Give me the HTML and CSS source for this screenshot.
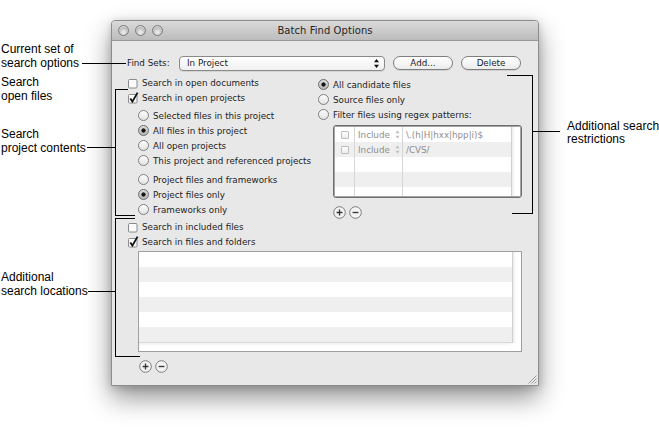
FILE: index.html
```html
<!DOCTYPE html>
<html>
<head>
<meta charset="utf-8">
<title>Batch Find Options</title>
<link rel="stylesheet" href="styles.css">
</head>
<body>
<div class="stage">
  <div class="window">
    <div class="titlebar">
      <div class="lights"><span class="light"></span><span class="light"></span><span class="light"></span></div>
      <div class="title">Batch Find Options</div>
      <div></div>
    </div>
    <div class="content">
      <div class="findrow">
        <span class="findlabel">Find Sets:</span>
        <div class="popup">
          <span class="popup-text">In Project</span>
          <svg class="popup-arrows" width="7" height="11" viewBox="0 0 7 11"><path d="M3.5 1 L6 4.2 L1 4.2 Z M3.5 10 L6 6.8 L1 6.8 Z" fill="#111"/></svg>
        </div>
        <div class="btn btn-add">Add...</div>
        <div class="btn">Delete</div>
      </div>

      <div class="columns">
        <div class="col-left">
          <div class="opt"><svg class="cb" width="12" height="12" viewBox="0 0 12 12"><rect x="1.5" y="2.5" width="8.5" height="8.5" rx="1" fill="#fbfbfb" stroke="#8a8a8a"/></svg>Search in open documents</div>
          <div class="opt"><svg class="cb" width="12" height="12" viewBox="0 0 12 12"><rect x="1.5" y="2.5" width="8.5" height="8.5" rx="1" fill="#fbfbfb" stroke="#8a8a8a"/><path d="M3.3 6.6 L5.4 9.6 L10.6 0.6" fill="none" stroke="#111" stroke-width="1.8"/></svg>Search in open projects</div>
          <div class="group g1">
            <div class="opt"><span class="rb indent"></span>Selected files in this project</div>
            <div class="opt"><span class="rb indent on"></span>All files in this project</div>
            <div class="opt"><span class="rb indent"></span>All open projects</div>
            <div class="opt"><span class="rb indent"></span>This project and referenced projects</div>
          </div>
          <div class="group g2">
            <div class="opt"><span class="rb indent"></span>Project files and frameworks</div>
            <div class="opt"><span class="rb indent on"></span>Project files only</div>
            <div class="opt"><span class="rb indent"></span>Frameworks only</div>
          </div>
          <div class="group g3">
            <div class="opt"><svg class="cb" width="12" height="12" viewBox="0 0 12 12"><rect x="1.5" y="2.5" width="8.5" height="8.5" rx="1" fill="#fbfbfb" stroke="#8a8a8a"/></svg>Search in included files</div>
            <div class="opt"><svg class="cb" width="12" height="12" viewBox="0 0 12 12"><rect x="1.5" y="2.5" width="8.5" height="8.5" rx="1" fill="#fbfbfb" stroke="#8a8a8a"/><path d="M3.3 6.6 L5.4 9.6 L10.6 0.6" fill="none" stroke="#111" stroke-width="1.8"/></svg>Search in files and folders</div>
          </div>
        </div>

        <div class="col-right">
          <div class="opt"><span class="rb rr on"></span>All candidate files</div>
          <div class="opt"><span class="rb rr"></span>Source files only</div>
          <div class="opt"><span class="rb rr"></span>Filter files using regex patterns:</div>
          <div class="ptable">
            <div class="ptable-body">
              <div class="prow">
                <div class="pc pc-cb"><span class="minicb"></span></div>
                <div class="pc pc-inc">Include<svg class="step" width="5" height="9" viewBox="0 0 5 9"><path d="M2.5 0.5 L4.5 3.3 L0.5 3.3 Z M2.5 8.5 L4.5 5.7 L0.5 5.7 Z" fill="#bdbdbd"/></svg></div>
                <div class="pc pc-pat">\.(h|H|hxx|hpp|i)$</div>
              </div>
              <div class="prow alt">
                <div class="pc pc-cb"><span class="minicb"></span></div>
                <div class="pc pc-inc">Include<svg class="step" width="5" height="9" viewBox="0 0 5 9"><path d="M2.5 0.5 L4.5 3.3 L0.5 3.3 Z M2.5 8.5 L4.5 5.7 L0.5 5.7 Z" fill="#bdbdbd"/></svg></div>
                <div class="pc pc-pat">/CVS/</div>
              </div>
              <div class="prow"><div class="pc pc-cb"></div><div class="pc pc-inc"></div><div class="pc pc-pat"></div></div>
              <div class="prow alt"><div class="pc pc-cb"></div><div class="pc pc-inc"></div><div class="pc pc-pat"></div></div>
              <div class="prow last"><div class="pc pc-cb"></div><div class="pc pc-inc"></div><div class="pc pc-pat"></div></div>
            </div>
            <div class="vscroll"></div>
          </div>
          <div class="pm pm-right">
            <svg width="13" height="13" viewBox="0 0 13 13"><circle cx="6.5" cy="6.5" r="5.8" fill="#f3f3f3" stroke="#7c7c7c"/><path d="M3.6 6.5 H9.4 M6.5 3.6 V9.4" stroke="#333" stroke-width="1.3"/></svg>
            <svg width="13" height="13" viewBox="0 0 13 13"><circle cx="6.5" cy="6.5" r="5.8" fill="#f3f3f3" stroke="#7c7c7c"/><path d="M3.6 6.5 H9.4" stroke="#333" stroke-width="1.3"/></svg>
          </div>
        </div>
      </div>

      <div class="filelist">
        <div class="fl-main">
          <div class="fl-rows">
            <div class="frow"></div>
            <div class="frow alt"></div>
            <div class="frow"></div>
            <div class="frow alt"></div>
            <div class="frow"></div>
            <div class="frow alt"></div>
          </div>
          <div class="vscroll"></div>
        </div>
        <div class="hscroll"></div>
      </div>
      <div class="pm pm-left">
        <svg width="13" height="13" viewBox="0 0 13 13"><circle cx="6.5" cy="6.5" r="5.8" fill="#f3f3f3" stroke="#7c7c7c"/><path d="M3.6 6.5 H9.4 M6.5 3.6 V9.4" stroke="#333" stroke-width="1.3"/></svg>
        <svg width="13" height="13" viewBox="0 0 13 13"><circle cx="6.5" cy="6.5" r="5.8" fill="#f3f3f3" stroke="#7c7c7c"/><path d="M3.6 6.5 H9.4" stroke="#333" stroke-width="1.3"/></svg>
      </div>
    </div>
    <svg class="grip" width="10" height="10" viewBox="0 0 10 10"><path d="M9.5 1.5 L1.5 9.5 M9.5 4.5 L4.5 9.5 M9.5 7.5 L7.5 9.5" stroke="#9a9a9a" stroke-width="1"/></svg>
  </div>

  <div class="note n1">Current set of<br>search options</div>
  <div class="note n2">Search<br>open files</div>
  <div class="note n3">Search<br>project contents</div>
  <div class="note n4">Additional<br>search locations</div>
  <div class="note n5">Additional search<br>restrictions</div>

  <div class="ln l1"></div>
  <div class="ln l2"></div>
  <div class="ln l3"></div>
  <div class="ln l4"></div>
  <div class="bk bk1"></div>
  <div class="ln t1b"></div>
  <div class="bk bk2"></div>
  <div class="ln t2b"></div>
  <div class="bk bk3"></div>
  <div class="ln t3b"></div>
</div>
</body>
</html>
```

FILE: styles.css
```css
* { box-sizing: border-box; }
html, body { margin: 0; padding: 0; background: #fff; }
body { width: 659px; height: 431px; overflow: hidden; }

.stage {
  position: relative;
  width: 659px;
  height: 431px;
  padding: 20px 0 0 111px;
  font-family: "DejaVu Sans", sans-serif;
  font-size: 8.75px;
  color: #1c1c1c;
}

/* window */
.window {
  position: relative;
  width: 428px;
  height: 366px;
  background: #e8e8e8;
  border: 1px solid #8c8c8c;
  border-radius: 4px 4px 0 0;
  box-shadow: 0 12px 26px rgba(0, 0, 0, 0.42), 0 2px 8px rgba(0, 0, 0, 0.18);
  display: flex;
  flex-direction: column;
}

.titlebar {
  height: 20px;
  flex: none;
  display: grid;
  grid-template-columns: 1fr auto 1fr;
  align-items: center;
  background: linear-gradient(#dadada, #bcbcbc);
  border-bottom: 1px solid #989898;
  border-radius: 3px 3px 0 0;
}
.lights { display: flex; gap: 6px; padding-left: 6px; }
.light {
  width: 11px; height: 11px; border-radius: 50%;
  background: radial-gradient(circle at 50% 70%, #f4f4f4 0, #c9c9c9 45%, #8e8e8e 100%);
  border: 1px solid #7b7b7b;
  box-shadow: inset 0 1px 1px rgba(255,255,255,0.7);
}
.title {
  font-size: 10px;
  color: #262626;
  letter-spacing: 0.05px;
}

.content {
  flex: 1;
  padding: 14px 0 0 15px;
  display: flex;
  flex-direction: column;
}

/* find sets row */
.findrow { display: flex; align-items: center; height: 16px; }
.findlabel { width: 52px; }
.popup {
  width: 206px; height: 15px;
  border: 1px solid #8a8a8a;
  border-radius: 4px;
  background: linear-gradient(#ffffff, #f0f0f0);
  display: flex; align-items: center; justify-content: space-between;
  padding: 0 4px 0 7px;
  box-shadow: 0 1px 0 rgba(0,0,0,0.08);
}
.popup-arrows { display: block; }
.btn {
  width: 60px; height: 14px;
  border: 1px solid #7e7e7e;
  border-radius: 7px;
  background: linear-gradient(#ffffff, #ececec);
  display: flex; align-items: center; justify-content: center;
  margin-left: 8px;
  box-shadow: 0 1px 0 rgba(0,0,0,0.1);
}

/* columns */
.columns { display: flex; margin-top: 4px; }
.col-left { width: 190px; }
.col-right { padding-top: 2px; }
.opt { display: flex; align-items: center; height: 15px; white-space: nowrap; }
.cb { display: block; margin-right: 3px; overflow: visible; }
.group.g1 { margin-top: 3px; }
.group.g2 { margin-top: 4px; }
.group.g3 { margin-top: 2px; }

.rb {
  width: 11px; height: 11px; border-radius: 50%;
  border: 1px solid #7f7f7f;
  background: linear-gradient(#fdfdfd, #e2e2e2);
  margin-right: 4px;
  flex: none;
}
.rb.indent { margin-left: 11px; }
.rb.rr { margin-left: 1px; margin-right: 4px; }
.rb.on {
  background: radial-gradient(circle at center, #151515 0, #151515 1.8px, transparent 2.4px), linear-gradient(#dcdcdc, #b6b6b6);
  border-color: #6c6c6c;
}

/* pattern table */
.ptable {
  margin: 3px 0 0 16px;
  width: 189px; height: 73px;
  border: 1px solid #6f6f6f;
  box-shadow: inset 0 0 0 1px #a4a4a4;
  border-radius: 3px;
  background: #fff;
  display: flex;
  padding: 1px;
  overflow: hidden;
}
.ptable-body { flex: 1; display: flex; flex-direction: column; }
.prow { display: grid; grid-template-columns: 20px 48px 1fr; height: 15px; background: #fff; }
.prow.alt { background: #efefef; }
.prow.last { flex: 1; }
.pc { border-right: 1px solid #d6d6d6; display: flex; align-items: center; color: #8e8e8e; white-space: nowrap; }
.pc-pat { border-right: none; padding-left: 3px; }
.pc-cb { justify-content: center; padding-left: 1px; }
.pc-inc { padding-left: 3px; }
.step { margin-left: 5px; display: block; }
.minicb {
  width: 8px; height: 8px;
  border: 1px solid #bdbdbd;
  border-radius: 1px;
  background: linear-gradient(#fff, #ececec);
}
.vscroll {
  width: 9px;
  background: #fff;
  border-left: 1px solid #cfcfcf;
  box-shadow: inset 2px 0 2px rgba(0,0,0,0.06);
}

.pm { display: flex; gap: 3px; }
.pm svg { display: block; }
.pm-right { margin: 8px 0 0 16px; }
.pm-left { margin: 8px 0 0 12px; }

/* file list */
.filelist {
  margin: 2px 0 0 11px;
  width: 384px; height: 101px;
  border: 1px solid #a0a0a0;
  background: #fff;
  display: flex; flex-direction: column;
}
.fl-main { flex: 1; display: flex; }
.fl-rows { flex: 1; display: flex; flex-direction: column; border-bottom: 1px solid #d8d8d8; }
.frow { height: 15px; background: #fff; }
.frow.alt { background: #efefef; }
.hscroll {
  height: 9px;
  background: #fff;
  box-shadow: inset 0 2px 2px rgba(0,0,0,0.05);
  margin-right: 10px;
}

.grip { position: absolute; right: 1px; bottom: 1px; }

/* annotations */
.note {
  position: absolute;
  font-family: "Liberation Sans", Arial, sans-serif;
  font-size: 12px;
  line-height: 14px;
  color: #000;
  white-space: nowrap;
}
.n1 { left: 1px; top: 42px; }
.n2 { left: 1px; top: 75px; }
.n3 { left: 1px; top: 127px; }
.n4 { left: 1px; top: 270px; }
.n5 { left: 567px; top: 120px; line-height: 13px; }

.ln { position: absolute; height: 1px; background: #000; }
.l1 { left: 82px; top: 63px; width: 44px; }
.l2 { left: 87px; top: 147px; width: 28px; }
.l3 { left: 88px; top: 291px; width: 27px; }
.l4 { left: 533px; top: 131px; width: 27px; }

.bk { position: absolute; border-top: 1px solid #000; }
.bk1 { left: 115px; top: 89px; width: 13px; height: 127px; border-left: 1px solid #000; }
.t1b { left: 115px; top: 215px; width: 20px; }
.bk2 { left: 115px; top: 218px; width: 20px; height: 139px; border-left: 1px solid #000; }
.t2b { left: 115px; top: 356px; width: 25px; }
.bk3 { left: 507px; top: 75px; width: 26px; height: 139px; border-right: 1px solid #000; }
.t3b { left: 512px; top: 213px; width: 21px; }
```
